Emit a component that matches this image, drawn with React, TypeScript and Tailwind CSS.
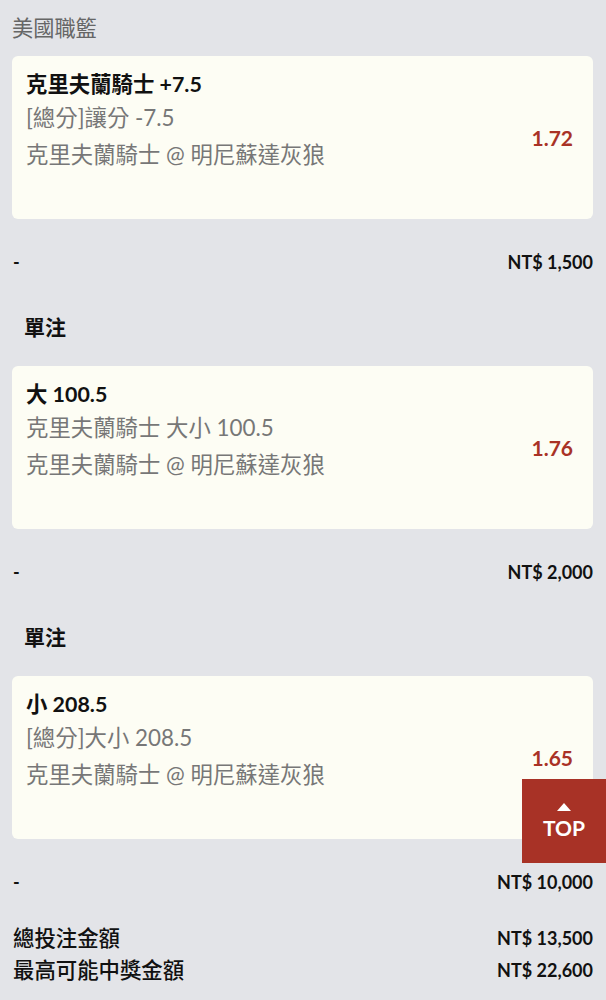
import React from 'react';

type Bet = {
  title: string;
  market: string;
  match: string;
  odds: string;
  amount: string;
};

const bets: Bet[] = [
  {
    title: '克里夫蘭騎士 +7.5',
    market: '[總分]讓分 -7.5',
    match: '克里夫蘭騎士 @ 明尼蘇達灰狼',
    odds: '1.72',
    amount: 'NT$ 1,500',
  },
  {
    title: '大 100.5',
    market: '克里夫蘭騎士 大小 100.5',
    match: '克里夫蘭騎士 @ 明尼蘇達灰狼',
    odds: '1.76',
    amount: 'NT$ 2,000',
  },
  {
    title: '小 208.5',
    market: '[總分]大小 208.5',
    match: '克里夫蘭騎士 @ 明尼蘇達灰狼',
    odds: '1.65',
    amount: 'NT$ 10,000',
  },
];

const font = { fontFamily: 'Lato, "Noto Sans CJK TC", sans-serif' };

function BetCard({ bet }: { bet: Bet }) {
  return (
    <div className="flex h-[163px] items-stretch rounded-md bg-[#fdfdf4] pl-[14px] pr-[20px]">
      <div className="flex-1 pt-[13px]">
        <div className="text-[21.4px] font-bold leading-[30px] text-[#111]">{bet.title}</div>
        <div className="mt-[4px] text-[22.4px] leading-[30px] text-[#777]">{bet.market}</div>
        <div className="mt-[7px] text-[22.4px] leading-[30px] text-[#777]">{bet.match}</div>
      </div>
      <div className="flex items-center pt-[1px] text-[21px] font-bold text-[#a93226]">{bet.odds}</div>
    </div>
  );
}

function AmountRow({ amount }: { amount: string }) {
  return (
    <div className="mt-[28px] flex h-[30px] items-center justify-between pl-[1px] text-[18px] leading-[30px] text-[#111]">
      <span className="font-bold">-</span>
      <span className="font-bold">{amount}</span>
    </div>
  );
}

export default function App() {
  return (
    <div className="relative min-h-[1000px] w-[606px] bg-[#e3e4e8]" style={font}>
      <div className="pl-[12px] pr-[13px] pt-[13px] pb-[20px]">
        <div className="text-[21.2px] leading-[30px] text-[#666]">美國職籃</div>

        {bets.map((bet, i) => (
          <div key={i}>
            {i > 0 && (
              <div className="mt-[35px] mb-[24px] pl-[12px] text-[21px] font-bold leading-[30px] text-[#111]">
                單注
              </div>
            )}
            {i === 0 && <div className="h-[13px]" />}
            <BetCard bet={bet} />
            <AmountRow amount={bet.amount} />
          </div>
        ))}

        <div className="mt-[26px] flex h-[30px] items-center justify-between pl-[1px] leading-[30px] text-[#111]">
          <span className="text-[21.4px] font-medium">總投注金額</span>
          <span className="text-[18px] font-bold">NT$ 13,500</span>
        </div>
        <div className="mt-[2px] flex h-[30px] items-center justify-between pl-[1px] leading-[30px] text-[#111]">
          <span className="text-[21.4px] font-medium">最高可能中獎金額</span>
          <span className="text-[18px] font-bold">NT$ 22,600</span>
        </div>
      </div>

      <button className="absolute left-[522px] top-[779px] flex h-[84px] w-[84px] flex-col items-center justify-center bg-[#a83226] text-white">
        <svg width="14" height="8" viewBox="0 0 14 8" className="mb-[6px]">
          <polygon points="7,0 14,8 0,8" fill="white" />
        </svg>
        <span className="text-[21px] font-bold leading-[22px]">TOP</span>
      </button>
    </div>
  );
}
